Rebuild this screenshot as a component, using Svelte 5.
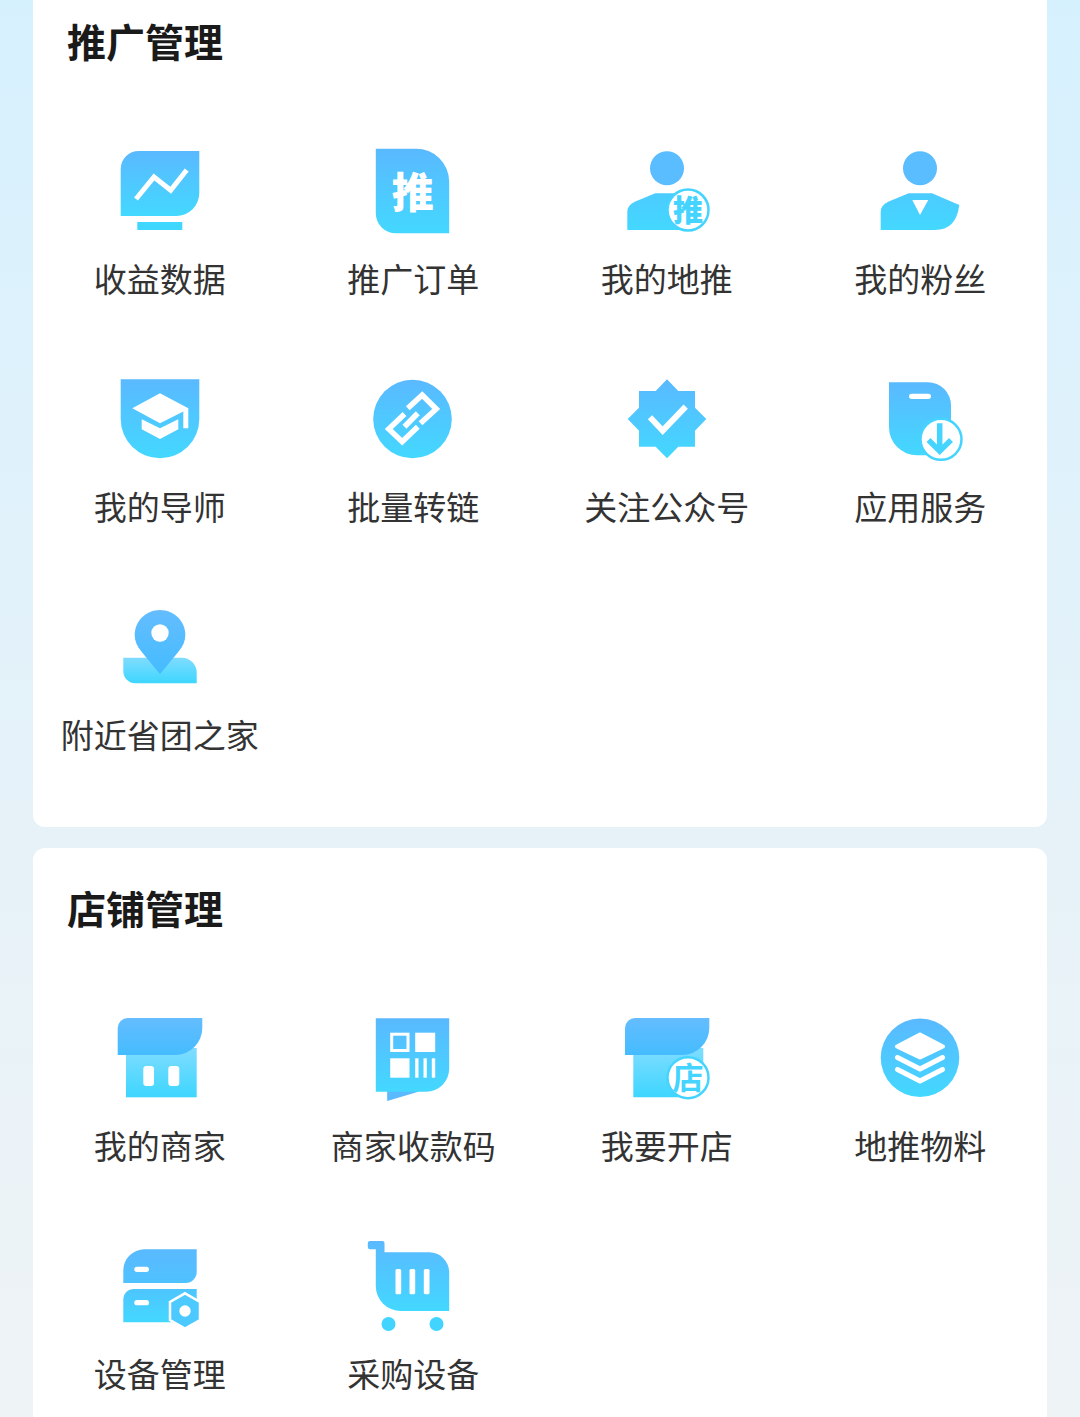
<script lang="ts">
  type Item = { label: string; icon: string };

  const sections: { title: string; items: Item[] }[] = [
    {
      title: "推广管理",
      items: [
        { label: "收益数据", icon: "chart" },
        { label: "推广订单", icon: "order" },
        { label: "我的地推", icon: "promoter" },
        { label: "我的粉丝", icon: "fans" },
        { label: "我的导师", icon: "mentor" },
        { label: "批量转链", icon: "link" },
        { label: "关注公众号", icon: "badge" },
        { label: "应用服务", icon: "app" },
        { label: "附近省团之家", icon: "pin" },
      ],
    },
    {
      title: "店铺管理",
      items: [
        { label: "我的商家", icon: "shop" },
        { label: "商家收款码", icon: "qr" },
        { label: "我要开店", icon: "open" },
        { label: "地推物料", icon: "layers" },
        { label: "设备管理", icon: "device" },
        { label: "采购设备", icon: "cart" },
      ],
    },
  ];
</script>

{#snippet awning(x: number)}
  <path d="M{x} 47V20a10 10 0 0 1 10-10h{92.3 - x - 10}v10a27 27 0 0 1-27 27z" fill="url(#awn)" />
{/snippet}

{#snippet glyph(icon: string)}
  <svg class="icon" viewBox="0 0 100 100" aria-hidden="true">
    {#if icon === "chart"}
      <path d="M10.700 76V29a18 18 0 0 1 18-18h60.600v42a23 23 0 0 1-23 23z" fill="url(#main)" />
      <rect x="27.300" y="82" width="45" height="8" fill="#3fd6ff" />
      <path d="M26 59 44 37l16.700 13.300L76.700 30" class="line" stroke-width="5" />
    {:else if icon === "order"}
      <path d="M12.800 8.700h40a33 33 0 0 1 33.400 33v51.600H32.800a20 20 0 0 1-20-20z" fill="url(#main)" />
      <text x="49.800" y="68" class="txt heavy" font-size="42">推</text>
    {:else if icon === "promoter"}
      <circle cx="50" cy="28.300" r="17" fill="#59bdff" />
      <path d="M10.300 90V72q0-7 8-10.500l20-8.200h26L71 56v34z" fill="url(#body)" />
      <circle cx="71" cy="70" r="20.500" fill="#fff" stroke="#45d4ff" stroke-width="2.500" />
      <text x="71" y="80.500" class="txt accent heavy" font-size="30">推</text>
    {:else if icon === "fans"}
      <circle cx="50" cy="28.300" r="17" fill="#59bdff" />
      <path d="M10.700 90V72q0-7 8-10.500l20-8.200h23.300L89.300 65q-3 25-24.300 25z" fill="url(#body)" />
      <path d="M42.300 60h16L50 75z" fill="#fff" />
    {:else if icon === "mentor"}
      <path d="M10.700 11.300h78.600V51a39.300 39.300 0 0 1-78.600 0z" fill="url(#main)" />
      <path d="M50 25.300 78.300 40.300V60.300h-5V43.500L50 55.300 22.300 40.300z" fill="#fff" />
      <path d="M31.700 51.300 50 60.300l18.300-9v10L50 71l-18.300-9.700z" fill="#fff" />
    {:else if icon === "link"}
      <circle cx="49.500" cy="51" r="39.300" fill="url(#main)" />
      <path d="M44.800 40.300 59.200 27l14 14-15.700 14.300" class="line" stroke-width="5.500" />
      <path d="M41.500 58.700 54.800 45.300" class="line" stroke-width="5.500" />
      <path d="M54.800 58.700 39.200 73.700 25.800 61l15.700-15" class="line" stroke-width="5.500" />
    {:else if icon === "badge"}
      <path d="M50 11.300 61.300 23H78v16.700L89.300 51 78 62.700v16H61.300L50 90.300 38.700 78.700H22v-16L10.700 51 22 39.700V23h16.700z" fill="url(#main)" />
      <path d="M33 49.300 45.700 62.700l23-24" class="line" stroke-width="6" />
    {:else if icon === "app"}
      <path d="M19 14.300h39a23 23 0 0 1 23 23v50H47a28 28 0 0 1-28-28z" fill="url(#main)" />
      <rect x="39" y="25.700" width="22" height="5.300" rx="2.650" fill="#fff" />
      <circle cx="71" cy="71.300" r="20.500" fill="#fff" stroke="#45d4ff" stroke-width="2.500" />
      <path d="M69.700 55.300V80M58.500 72l11.200 11.200L81 72" class="line accent-line" stroke-width="5.500" />
    {:else if icon === "pin"}
      <path d="M13.300 61.700h58.400a15 15 0 0 1 15 15v10.600H25.300a12 12 0 0 1-12-12z" fill="url(#soft)" />
      <path d="M50 78.300 31 55C27 50 24.700 45 24.700 39 24.700 25 36 14 50 14s25.300 11 25.300 25c0 6-2.300 11-6.300 16z" fill="url(#awn)" />
      <circle cx="50" cy="37" r="8.700" fill="#fff" />
    {:else if icon === "shop"}
      <rect x="16" y="40" width="70.700" height="49.300" fill="url(#soft)" />
      {@render awning(7.7)}
      <rect x="33.300" y="58" width="10.700" height="20" rx="3" fill="#fff" />
      <rect x="58.300" y="58" width="11" height="20" rx="3" fill="#fff" />
    {:else if icon === "qr"}
      <path d="M24.200 80v13l32-9.500z" fill="#5ab9ff" />
      <path d="M12.800 10.300h73.400v50.400a23 23 0 0 1-23 23H12.800z" fill="url(#main)" />
      <rect x="28.700" y="26.200" width="16.300" height="16.300" fill="none" stroke="#fff" stroke-width="3" />
      <rect x="52.200" y="24.700" width="20" height="19.300" fill="#fff" />
      <rect x="27.200" y="50.300" width="19.300" height="19.400" fill="#fff" />
      <rect x="52.200" y="50.300" width="3.300" height="19.400" fill="#fff" />
      <rect x="60.500" y="50.300" width="3.300" height="19.400" fill="#fff" />
      <rect x="68.800" y="50.300" width="3.400" height="19.400" fill="#fff" />
    {:else if icon === "open"}
      <path d="M16.300 40h70v16L71 89.300H16.300z" fill="url(#soft)" />
      {@render awning(8)}
      <circle cx="71" cy="69.700" r="20.500" fill="#fff" stroke="#45d4ff" stroke-width="2.500" />
      <text x="71" y="80.500" class="txt accent" font-size="31">店</text>
    {:else if icon === "layers"}
      <circle cx="50" cy="49.700" r="39.300" fill="url(#main)" />
      <path d="M50 25.500 73 37.500a1 1 0 0 1 0 2L50 50.500 27 39.500a1 1 0 0 1 0-2z" fill="#fff" stroke="#fff" stroke-width="2" stroke-linejoin="round" />
      <path d="M27.500 49.500 50 61l22.500-11.500" class="round-line" stroke-width="5" />
      <path d="M27.500 61.500 50 73l22.500-11.500" class="round-line" stroke-width="5" />
    {:else if icon === "device"}
      <path d="M13.300 47V34.300a21 21 0 0 1 21-21h52.400V36a11 11 0 0 1-11 11z" fill="url(#upper)" />
      <path d="M13.300 86.300V63a10 10 0 0 1 10-10h63.400v33.300z" fill="url(#lower)" />
      <rect x="24.300" y="30.700" width="14.700" height="5.300" rx="2.650" fill="#fff" />
      <rect x="24.300" y="64" width="14.700" height="5.300" rx="2.650" fill="#fff" />
      <path d="M75 57.300 90 66v18l-15 8.700L60 84V66z" fill="#4cc9ff" stroke="#fff" stroke-width="2.500" />
      <circle cx="75" cy="75" r="5.700" fill="#fff" />
    {:else if icon === "cart"}
      <path d="M7 5h12.500a2 2 0 0 1 2 2v9.300H66.200a20 20 0 0 1 20 20V75H37.800a25 25 0 0 1-25-25V13.300H7a2.200 2.200 0 0 1-2.200-2.200V7.200A2.200 2.200 0 0 1 7 5z" fill="url(#main)" />
      <rect x="32.500" y="33" width="5.700" height="25.300" rx="1.500" fill="#fff" />
      <rect x="46.500" y="33" width="5.700" height="25.300" rx="1.500" fill="#fff" />
      <rect x="60.800" y="33" width="5.700" height="25.300" rx="1.500" fill="#fff" />
      <circle cx="25.500" cy="88" r="7" fill="#42d4ff" />
      <circle cx="73.500" cy="88" r="7" fill="#42d4ff" />
    {/if}
  </svg>
{/snippet}

<svg class="defs" width="0" height="0" aria-hidden="true">
  <defs>
    <linearGradient id="main" x1="0" y1="0" x2="0" y2="1">
      <stop offset="0" stop-color="#5ab9ff" />
      <stop offset="1" stop-color="#43d8ff" />
    </linearGradient>
    <linearGradient id="body" x1="0" y1="0" x2="0" y2="1">
      <stop offset="0" stop-color="#4ccbff" />
      <stop offset="1" stop-color="#43d8ff" />
    </linearGradient>
    <linearGradient id="awn" x1="0" y1="0" x2="0" y2="1">
      <stop offset="0" stop-color="#64bdff" />
      <stop offset="1" stop-color="#44bcff" />
    </linearGradient>
    <linearGradient id="soft" x1="0" y1="0" x2="0" y2="1">
      <stop offset="0" stop-color="#80dcff" />
      <stop offset="1" stop-color="#3dd6ff" />
    </linearGradient>
    <linearGradient id="upper" x1="0" y1="0" x2="0" y2="1">
      <stop offset="0" stop-color="#5ab9ff" />
      <stop offset="1" stop-color="#4fc2ff" />
    </linearGradient>
    <linearGradient id="lower" x1="0" y1="0" x2="0" y2="1">
      <stop offset="0" stop-color="#4ec5ff" />
      <stop offset="1" stop-color="#43d8ff" />
    </linearGradient>
  </defs>
</svg>

<div class="page">
  {#each sections as section}
    <section class="card">
      <h2>{section.title}</h2>
      <div class="grid">
        {#each section.items as item}
          <div class="item">
            {@render glyph(item.icon)}
            <span>{item.label}</span>
          </div>
        {/each}
      </div>
    </section>
  {/each}
</div>

<style>
  :global(body) {
    overflow: hidden;
  }

  .defs {
    position: absolute;
  }

  .page {
    box-sizing: border-box;
    display: flex;
    flex-direction: column;
    gap: 21px;
    height: 1417px;
    padding: 0 33px;
    overflow: hidden;
    background: linear-gradient(180deg, #d6f1fe 0%, #e6f2f8 58%, #eef3f6 100%);
    font-family: "Noto Sans CJK SC", "Noto Sans", sans-serif;
  }

  .card {
    flex: 0 0 auto;
    padding: 34px 0 36px;
    border-radius: 12px;
    background: #fff;
  }

  .card:first-child {
    margin-top: -19.4px;
  }

  h2 {
    margin: 0;
    padding-left: 34px;
    color: #1a1a1a;
    font-size: 39px;
    font-weight: 700;
    line-height: 50px;
  }

  .grid {
    display: grid;
    grid-template-columns: repeat(4, 1fr);
    margin-top: 42.6px;
  }

  .item {
    display: flex;
    flex-direction: column;
    align-items: center;
    padding: 33px 0 34.4px;
  }

  .icon {
    display: block;
    width: 100px;
    height: 100px;
    overflow: visible;
  }

  .item span {
    margin-top: 14.6px;
    color: #333;
    font-size: 33px;
    line-height: 46px;
    white-space: nowrap;
  }

  .line {
    fill: none;
    stroke: #fff;
    stroke-linejoin: miter;
  }

  .accent-line {
    stroke: #45d4ff;
  }

  .round-line {
    fill: none;
    stroke: #fff;
    stroke-linecap: round;
    stroke-linejoin: round;
  }

  .txt {
    fill: #fff;
    font-family: "Noto Sans CJK SC", sans-serif;
    font-weight: 700;
    text-anchor: middle;
  }

  .heavy {
    font-weight: 900;
  }

  .accent {
    fill: #45d4ff;
  }
</style>
